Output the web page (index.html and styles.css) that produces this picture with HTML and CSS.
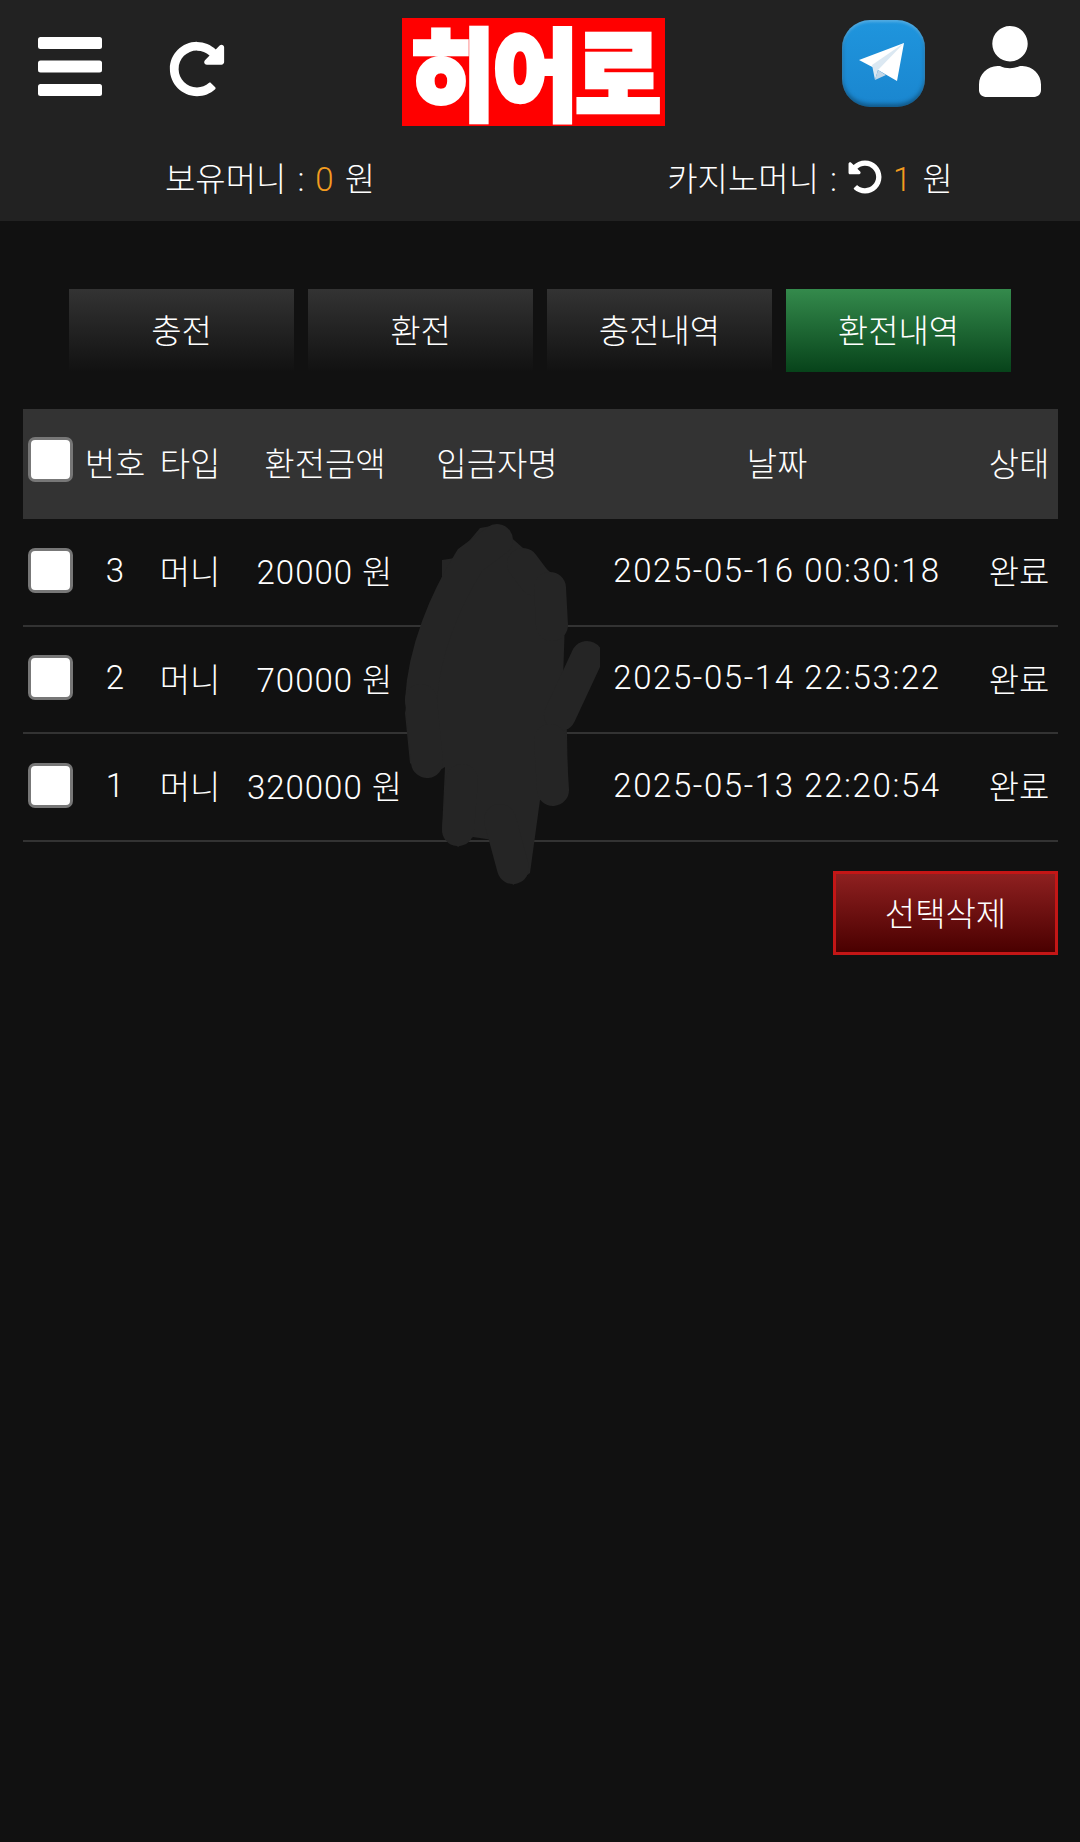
FILE: index.html
```html
<!DOCTYPE html>
<html lang="ko">
<head>
    <meta charset="UTF-8">
    <meta name="viewport" content="width=device-width, initial-scale=1.0">
    <title>환전내역</title>
    <link rel="stylesheet" href="styles.css">
</head>
<body>
    <header class="header">
        <div class="top-bar">
            <div class="icon-group icon-group-left">
                <svg class="icon-menu" viewBox="0 0 64 59"><rect y="0" width="64" height="12" rx="2.5"/><rect y="23.5" width="64" height="12" rx="2.5"/><rect y="47" width="64" height="12" rx="2.5"/></svg>
                <svg class="icon-refresh" viewBox="0 0 512 512"><path d="M256.455 8c66.269.119 126.437 26.233 170.859 68.685l35.715-35.715C478.149 25.851 504 36.559 504 57.941V192c0 13.255-10.745 24-24 24H345.941c-21.382 0-32.09-25.851-16.971-40.971l41.75-41.75c-30.864-28.899-70.801-44.907-113.23-45.273-92.398-.798-170.283 73.977-169.484 169.442C88.764 348.009 162.184 424 256 424c41.127 0 79.997-14.678 110.629-41.556 4.743-4.161 11.906-3.908 16.368.553l39.662 39.662c4.872 4.872 4.631 12.815-.482 17.433C378.202 479.813 319.926 504 256 504 119.034 504 8.001 392.967 8 256.002 7.999 119.193 119.646 7.755 256.455 8z"/></svg>
            </div>
            <div class="logo"><span class="logo-text">히어로</span></div>
            <div class="icon-group icon-group-right">
                <div class="telegram">
                    <svg viewBox="0 0 83 87">
                        <polygon points="17,40 62,23 55,61 36,50" fill="#ffffff"/>
                        <polygon points="62,23 30,45 33,60 36,50" fill="#dbe8f2"/>
                        <polygon points="33,60 36,50 44,55" fill="#c3d6e6"/>
                    </svg>
                </div>
                <svg class="icon-user" viewBox="0 0 448 512"><path d="M224 256c70.7 0 128-57.3 128-128S294.7 0 224 0 96 57.3 96 128s57.3 128 128 128zm89.6 32h-16.7c-22.2 10.2-46.9 16-72.9 16s-50.6-5.8-72.9-16h-16.7C60.2 288 0 348.2 0 422.4V464c0 26.5 21.5 48 48 48h352c26.5 0 48-21.5 48-48v-41.6c0-74.2-60.2-134.4-134.4-134.4z"/></svg>
            </div>
        </div>
        <div class="money-bar">
            <div class="money">보유머니 : <span class="amount">0</span> 원</div>
            <div class="money">카지노머니 : <svg class="icon-undo" viewBox="0 0 512 512"><path transform="translate(512 0) scale(-1 1)" d="M256.455 8c66.269.119 126.437 26.233 170.859 68.685l35.715-35.715C478.149 25.851 504 36.559 504 57.941V192c0 13.255-10.745 24-24 24H345.941c-21.382 0-32.09-25.851-16.971-40.971l41.75-41.75c-30.864-28.899-70.801-44.907-113.23-45.273-92.398-.798-170.283 73.977-169.484 169.442C88.764 348.009 162.184 424 256 424c41.127 0 79.997-14.678 110.629-41.556 4.743-4.161 11.906-3.908 16.368.553l39.662 39.662c4.872 4.872 4.631 12.815-.482 17.433C378.202 479.813 319.926 504 256 504 119.034 504 8.001 392.967 8 256.002 7.999 119.193 119.646 7.755 256.455 8z"/></svg> <span class="amount">1</span> 원</div>
        </div>
    </header>

    <main class="content">
        <nav class="tabs">
            <a class="tab">충전</a>
            <a class="tab">환전</a>
            <a class="tab">충전내역</a>
            <a class="tab tab-active">환전내역</a>
        </nav>

        <div class="table-wrap">
            <table class="history">
                <colgroup>
                    <col class="col-check">
                    <col class="col-no">
                    <col class="col-type">
                    <col class="col-amount">
                    <col class="col-name">
                    <col class="col-date">
                    <col class="col-status">
                </colgroup>
                <thead>
                    <tr>
                        <th><input type="checkbox" class="check"></th>
                        <th>번호</th>
                        <th>타입</th>
                        <th>환전금액</th>
                        <th>입금자명</th>
                        <th>날짜</th>
                        <th>상태</th>
                    </tr>
                </thead>
                <tbody>
                    <tr>
                        <td><input type="checkbox" class="check"></td>
                        <td>3</td>
                        <td>머니</td>
                        <td class="cell-amount">20000 원</td>
                        <td></td>
                        <td class="cell-date">2025-05-16 00:30:18</td>
                        <td>완료</td>
                    </tr>
                    <tr>
                        <td><input type="checkbox" class="check"></td>
                        <td>2</td>
                        <td>머니</td>
                        <td class="cell-amount">70000 원</td>
                        <td></td>
                        <td class="cell-date">2025-05-14 22:53:22</td>
                        <td>완료</td>
                    </tr>
                    <tr>
                        <td><input type="checkbox" class="check"></td>
                        <td>1</td>
                        <td>머니</td>
                        <td class="cell-amount">320000 원</td>
                        <td></td>
                        <td class="cell-date">2025-05-13 22:20:54</td>
                        <td>완료</td>
                    </tr>
                </tbody>
            </table>
            <!-- name column painted over in the screenshot -->
            <svg class="scribble" viewBox="400 520 200 370">
                <polygon fill="#252525" points="497,525 523,548 550,572 565,620 563,680 567,733 568,793 540,800 530,873 513,885 493,840 473,837 458,847 442,830 445,767 427,778 410,763 405,713 420,633 442,577 442,560 455,558 480,528"/>
                <g fill="none" stroke="#252525" stroke-width="32" stroke-linecap="round">
                    <path d="M421 700 C424 650 445 600 470 560 L497 540"/>
                    <path d="M523 564 L535 580"/>
                    <path d="M550 588 L552 625"/>
                    <path d="M587 657 L560 715"/>
                    <path d="M550 740 L553 790"/>
                    <path d="M513 868 L500 820"/>
                    <path d="M458 830 L462 780"/>
                    <path d="M427 762 L421 700"/>
                </g>
            </svg>
        </div>

        <div class="actions">
            <button class="btn-delete">선택삭제</button>
        </div>
    </main>
</body>
</html>
```

FILE: styles.css
```css
* {
    box-sizing: border-box;
}
body {
    margin: 0;
    background-color: #111;
    color: #fff;
    font-family: Roboto, "Noto Sans CJK KR", sans-serif;
    font-size: 33px;
    font-weight: 300;
}
.header {
    height: 221px;
    background-color: #222;
}
.top-bar {
    display: flex;
    justify-content: space-between;
    align-items: flex-start;
    height: 126px;
    padding: 18px 39px 0 38px;
}
.icon-group {
    display: flex;
    align-items: flex-start;
}
.icon-group svg {
    display: block;
    fill: #fff;
}
.icon-group-left {
    gap: 67px;
}
.icon-group-right {
    gap: 54px;
}
.icon-menu {
    width: 64px;
    height: 59px;
    margin-top: 19px;
}
.icon-refresh {
    width: 56px;
    height: 56px;
    margin-top: 23px;
}
.icon-user {
    width: 62px;
    height: 71px;
    margin-top: 8px;
}
.telegram {
    width: 83px;
    height: 87px;
    margin-top: 2px;
    border-radius: 28px;
    background: linear-gradient(#1f95dd, #1a86cf);
    box-shadow: inset 0 -3px 4px rgba(0,0,0,0.35), inset 0 2px 3px rgba(255,255,255,0.25);
}
.logo {
    width: 263px;
    height: 108px;
    background-color: #f00;
    display: flex;
    align-items: center;
    justify-content: center;
}
.logo-text {
    display: block;
    font-family: "Noto Sans CJK KR", sans-serif;
    font-size: 88px;
    font-weight: 900;
    line-height: 88px;
    letter-spacing: -3px;
    -webkit-text-stroke: 4px #fff;
    transform: translateY(-3px) scale(1.06, 1.12);
}
.money-bar {
    display: flex;
    height: 95px;
    padding-top: 9px;
}
.money {
    flex: 1;
    text-align: center;
    line-height: 90px;
    word-spacing: 3px;
    white-space: nowrap;
}
.amount {
    color: #f39c1f;
}
.icon-undo {
    width: 34px;
    height: 34px;
    fill: #fff;
    vertical-align: -3px;
}
.content {
    padding: 68px 22px 0 23px;
}
.tabs {
    display: flex;
    gap: 14px;
    padding: 0 47px 0 46px;
}
.tab {
    flex: 1;
    height: 83px;
    padding-bottom: 4px;
    display: flex;
    align-items: center;
    justify-content: center;
    background: linear-gradient(#333, #111);
}
.tab-active {
    background: linear-gradient(#348a4c, #07431a);
}
.table-wrap {
    position: relative;
    margin-top: 37px;
}
.history {
    width: 100%;
    border-collapse: collapse;
    table-layout: fixed;
}
.col-check { width: 57px; }
.col-no { width: 70px; }
.col-type { width: 80px; }
.col-amount { width: 190px; }
.col-name { width: 154px; }
.col-date { width: 406px; }
.col-status { width: 78px; }
.history th, .history td {
    padding: 0;
    text-align: center;
    font-weight: 300;
    white-space: nowrap;
}
.history th {
    height: 110px;
    padding-bottom: 4px;
    background-color: #333;
}
.history td {
    height: 107px;
    padding-bottom: 4px;
    border-bottom: 2px solid #333;
}
.history tr:last-child td {
    height: 108px;
}
.history .cell-amount {
    letter-spacing: 1px;
}
.history .cell-date {
    letter-spacing: 1.6px;
}
.check {
    appearance: none;
    display: block;
    width: 45px;
    height: 45px;
    margin: 0 0 0 5px;
    border: 3px solid #777;
    border-radius: 7px;
    background-color: #fff;
}
th .check {
    margin-top: -6px;
}
.scribble {
    position: absolute;
    left: 377px;
    top: 111px;
    width: 200px;
    height: 370px;
}
.actions {
    display: flex;
    justify-content: flex-end;
    margin-top: 29px;
}
.btn-delete {
    width: 225px;
    height: 84px;
    padding-bottom: 4px;
    border: 3px solid #c41616;
    background: linear-gradient(#8e2020, #4a0000);
    color: #fff;
    font: inherit;
}
```
